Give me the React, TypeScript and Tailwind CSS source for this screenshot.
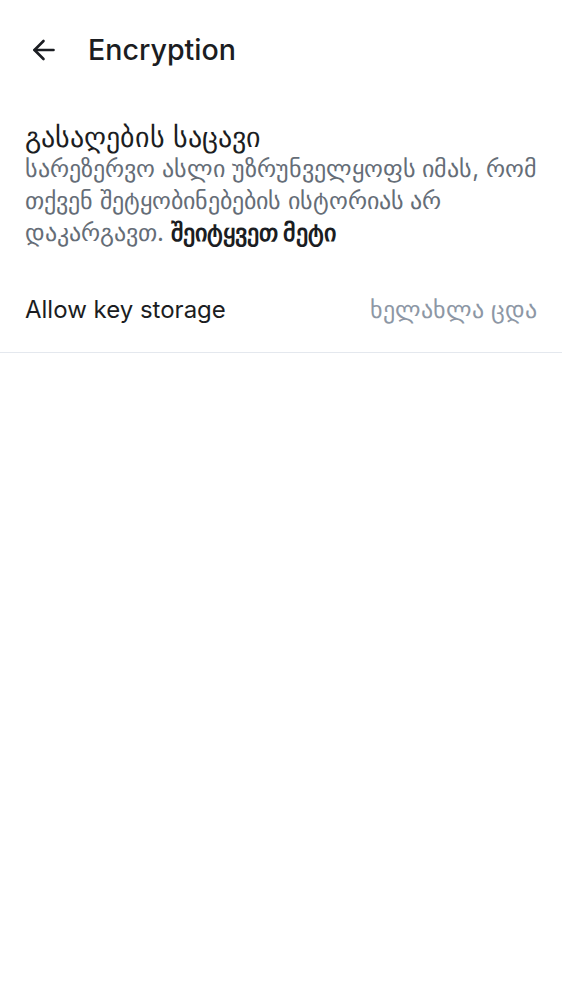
import React from 'react';

const App: React.FC = () => {
  return (
    <div className="min-h-screen w-full bg-white text-[#1b1d22] font-[Inter,sans-serif]">
      <header className="flex items-center h-[100px] pl-[32px]">
        <button className="flex items-center justify-center">
          <svg width="23" height="24" viewBox="0 0 23 24" fill="none" stroke="#1b1d22" strokeWidth="2.6" strokeLinecap="round" strokeLinejoin="round">
            <path d="M21.5 12H2.5" />
            <path d="M11.5 3L2.5 12l9 9" />
          </svg>
        </button>
        <h1 className="ml-[33px] text-[28.6px] font-medium">Encryption</h1>
      </header>

      <section className="pl-[25px] pr-[14px] pt-[21px]">
        <h2 className="text-[27.5px] leading-[32px] font-normal">გასაღების საცავი</h2>
        <p className="text-[24px] leading-[32px] text-[#656d77]">
          სარეზერვო ასლი უზრუნველყოფს იმას, რომ თქვენ შეტყობინებების ისტორიას არ დაკარგავთ.{' '}
          <span className="font-bold text-[#1b1d22]">შეიტყვეთ მეტი</span>
        </p>
      </section>

      <div className="mt-[18px] flex items-center justify-between px-[25px] h-[86px] border-b border-[#e4e8ee]">
        <span className="text-[24px]">Allow key storage</span>
        <span className="text-[24px] text-[#8d97a5]">ხელახლა ცდა</span>
      </div>
    </div>
  );
};

export default App;
